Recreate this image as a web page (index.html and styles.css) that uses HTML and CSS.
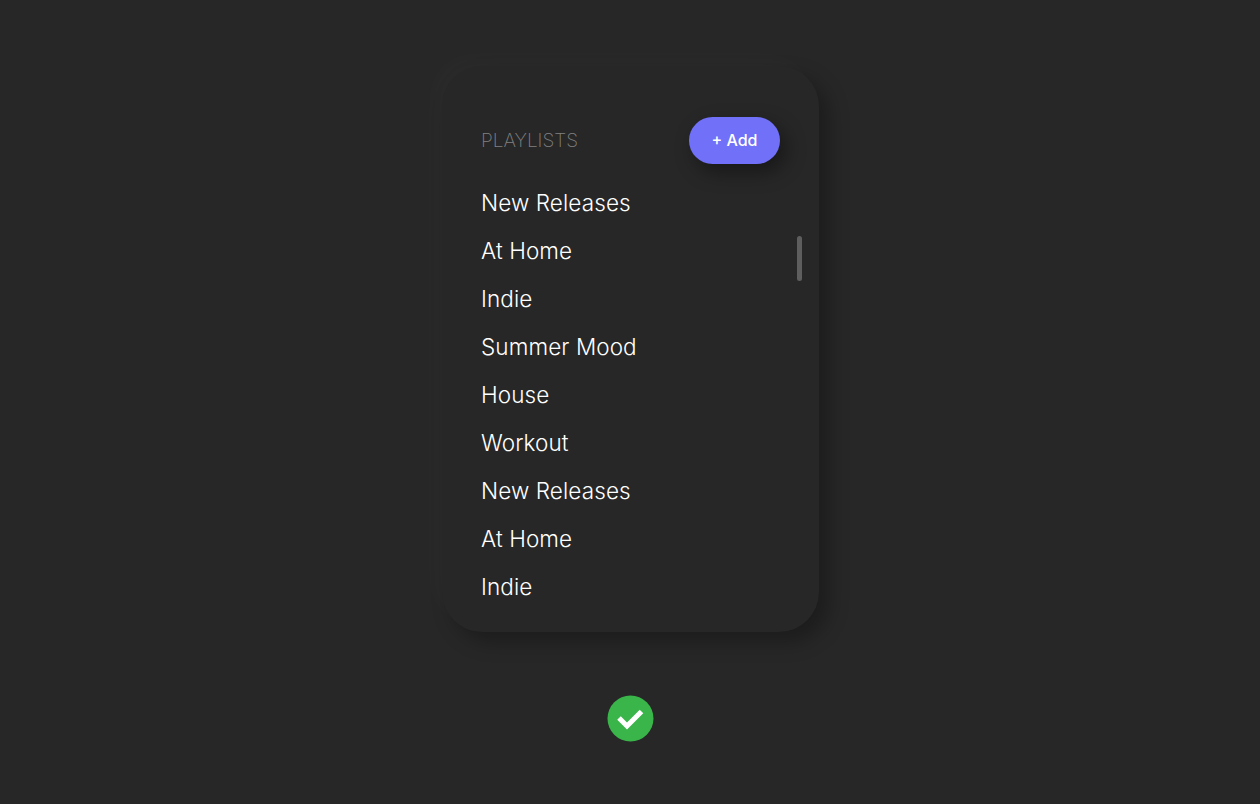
FILE: index.html
```html
<!DOCTYPE html>
<html lang="en">
<head>
<meta charset="utf-8">
<title>Playlists</title>
<link rel="stylesheet" href="styles.css">
</head>
<body>
<main class="page">
  <section class="card">
    <header class="card-head">
      <h1 class="title">PLAYLISTS</h1>
      <button class="add" type="button">+ Add</button>
    </header>
    <ul class="list">
      <li>New Releases</li>
      <li>At Home</li>
      <li>Indie</li>
      <li>Summer Mood</li>
      <li>House</li>
      <li>Workout</li>
      <li>New Releases</li>
      <li>At Home</li>
      <li>Indie</li>
    </ul>
    <div class="thumb"></div>
  </section>
  <div class="check">
    <svg viewBox="0 0 47 47" width="47" height="47" aria-hidden="true">
      <circle cx="23.5" cy="23.5" r="23" fill="#39b54a"/>
      <path d="M12 23l8 8L34.500 16.500" fill="none" stroke="#fff" stroke-width="5"/>
    </svg>
  </div>
</main>
</body>
</html>
```
FILE: styles.css
```css
* { box-sizing: border-box; }
html, body { margin: 0; height: 100%; }
body {
  background: #272727;
  font-family: "Inter", "Liberation Sans", sans-serif;
  color: #fff;
  overflow: hidden;
}
.page {
  display: flex;
  flex-direction: column;
  align-items: center;
  padding-top: 66px;
  gap: 63px;
}
.card {
  position: relative;
  width: 377px;
  height: 566px;
  margin-left: 1px;
  padding: 51px 39px 0;
  border-radius: 40px;
  background: #272727;
  box-shadow: 10px 10px 20px rgba(0,0,0,.28), -10px -10px 20px rgba(255,255,255,.02);
}
.card-head {
  display: flex;
  justify-content: space-between;
  align-items: center;
  height: 47px;
  margin-bottom: 14px;
}
.title {
  margin: 0;
  padding-bottom: 1px;
  font-size: 19px;
  font-weight: 200;
  color: #808080;
}
.add {
  width: 91px;
  height: 47px;
  padding: 0 0 2px;
  border: 0;
  border-radius: 24px;
  background: #7070f8;
  color: #fff;
  font: 500 16px "Inter", "Liberation Sans", sans-serif;
  box-shadow: 6px 8px 20px rgba(0,0,0,.4);
}
.list {
  list-style: none;
  margin: 0;
  padding: 0;
}
.list li {
  height: 48px;
  line-height: 50px;
  font-size: 22.500px;
  font-weight: 300;
  letter-spacing: .1px;
}
.thumb {
  position: absolute;
  left: 355px;
  top: 170px;
  width: 5px;
  height: 45px;
  border-radius: 3px;
  background: #5e5e5e;
}
.check { width: 47px; height: 47px; line-height: 0; }
```
